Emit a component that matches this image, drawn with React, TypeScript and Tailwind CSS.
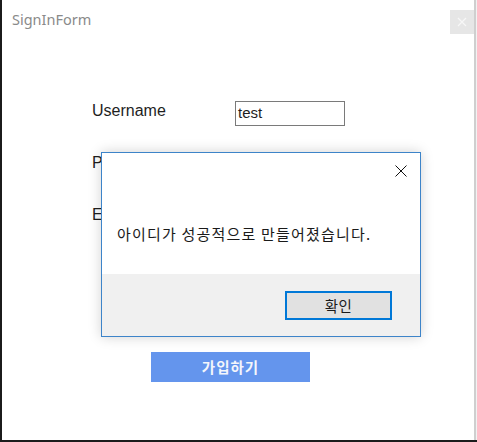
import React from "react";

export default function App() {
  return (
    <div className="relative flex w-[477px] h-[442px] bg-[#1b1b1b] overflow-hidden">
      {/* left dark strip */}
      <div className="w-[2px] shrink-0" />
      {/* window */}
      <div className="flex h-[440px] w-[475px] shrink-0">
        <div className="flex flex-1 flex-col bg-white">
          {/* title bar */}
          <div className="flex h-[44px] items-start justify-between">
            <div
              className="pl-[10px] pt-[9px] text-[14.5px] leading-[20px] text-[#8a8a8a]"
              style={{ fontFamily: '"Noto Sans", sans-serif' }}
            >
              SignInForm
            </div>
            <div className="mt-[10px] flex h-[24px] w-[24px] items-center justify-center bg-[#e6e6e6]">
              <svg width="10" height="10" viewBox="0 0 10 10">
                <path d="M1 1L9 9M9 1L1 9" stroke="#f7f7f7" strokeWidth="1.2" />
              </svg>
            </div>
          </div>
          {/* form */}
          <div
            className="flex flex-col pl-[90px] pt-[55px] text-[#1e1e1e]"
            style={{ fontFamily: '"Liberation Sans", Arial, sans-serif' }}
          >
            <div className="flex items-start h-[27px]">
              <div className="w-[143px] pt-[2px] text-[16px] leading-[20px]">Username</div>
              <div className="mt-[2px] flex h-[25px] w-[110px] items-center border border-[#7a7a7a] pl-[2px] text-[15px]">
                test
              </div>
            </div>
            <div className="mt-[25px] flex items-start h-[27px]">
              <div className="w-[143px] pt-[2px] text-[16px] leading-[20px]">Password</div>
            </div>
            <div className="mt-[25px] flex items-start h-[27px]">
              <div className="w-[143px] pt-[2px] text-[16px] leading-[20px]">Email</div>
            </div>
          </div>
          <div className="pl-[149px] pt-[122px]">
            <div
              className="flex h-[30px] w-[159px] items-center justify-center bg-[#6495ed] text-[14.5px] font-bold tracking-[1px] text-[#f4f6fb]"
              style={{ fontFamily: '"Noto Sans CJK KR", sans-serif' }}
            >
              가입하기
            </div>
          </div>
        </div>
        <div className="w-[2px] bg-[#cfcfcf]" />
        <div className="w-[1px] bg-[#f2f2f2]" />
      </div>

      {/* message box dialog */}
      <div
        className="absolute left-[101px] top-[152px] flex h-[185px] w-[320px] flex-col border border-[#3d84c9] bg-white shadow-[0_0_12px_rgba(0,0,0,0.18)]"
        style={{ fontFamily: '"Noto Sans CJK KR", sans-serif' }}
      >
        <div className="flex h-[121px] flex-col">
          <div className="flex justify-end pr-[13px] pt-[12px]">
            <svg width="12" height="12" viewBox="0 0 12 12">
              <path d="M0.5 0.5L11.5 11.5M11.5 0.5L0.5 11.5" stroke="#111" strokeWidth="1" />
            </svg>
          </div>
          <div className="pl-[15px] pt-[46px] text-[15px] leading-[22px] tracking-[1.2px] text-[#1a1a1a]">
            아이디가 성공적으로 만들어졌습니다.
          </div>
        </div>
        <div className="flex flex-1 justify-end bg-[#f0f0f0] pr-[28px] pt-[17px]">
          <div className="flex h-[29px] w-[107px] items-center justify-center border-2 border-[#0078d7] bg-[#e1e1e1] text-[14.5px] tracking-[0.5px] text-[#1a1a1a]">
            확인
          </div>
        </div>
      </div>
    </div>
  );
}
